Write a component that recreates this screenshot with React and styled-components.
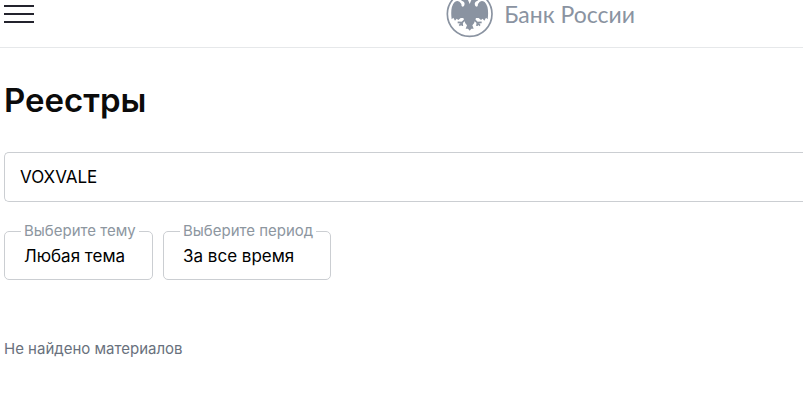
import { useState } from "react";
import styled, { createGlobalStyle } from "styled-components";

const filters = [
  { id: "theme", label: "Выберите тему", value: "Любая тема", width: 149 },
  { id: "period", label: "Выберите период", value: "За все время", width: 168 },
];

function Emblem() {
  return (
    <svg width="48" height="48" viewBox="0 0 144 144" aria-hidden="true">
      <circle cx="71" cy="72" r="67" fill="none" stroke="currentColor" strokeWidth="5" />
      <g fill="currentColor">
        <path d="M71 42 L67 32 Q62 24 53 25 L45 31 L53 35 Q58 40 54 48 Q46 54 46 42 Q38 27 26 36 Q12 50 17 88 L22 83 L27 92 L32 86 L37 90 L44 84 L52 84 L58 100 L63 106 L59 116 L66 116 L71 122 L76 116 L83 116 L79 106 L84 100 L90 84 L98 84 L105 90 L110 86 L115 92 L120 83 L125 88 Q130 50 116 36 Q104 27 96 42 Q96 54 88 48 Q84 40 89 35 L97 31 L89 25 Q80 24 75 32 Z" />
      </g>
      <g fill="none" stroke="currentColor" strokeWidth="5">
        <path d="M58 88 L48 98 L35 97 M48 98 L40 107 M48 98 L49 108" />
        <path d="M84 88 L94 98 L107 97 M94 98 L102 107 M94 98 L93 108" />
      </g>
    </svg>
  );
}

export default function App() {
  const [query, setQuery] = useState("VOXVALE");

  return (
    <>
      <GlobalStyle />
      <Header>
        <MenuButton type="button" aria-label="Меню">
          <MenuLine />
          <MenuLine />
          <MenuLine />
        </MenuButton>
        <Logo href="#">
          <Emblem />
          Банк России
        </Logo>
      </Header>
      <Main>
        <Title>Реестры</Title>
        <SearchInput
          type="text"
          aria-label="Поиск"
          value={query}
          onChange={(e) => setQuery(e.target.value)}
        />
        <Filters>
          {filters.map((f) => (
            <Filter key={f.id} $width={f.width}>
              <FilterLegend>
                <label htmlFor={f.id}>{f.label}</label>
              </FilterLegend>
              <FilterSelect id={f.id}>
                <option>{f.value}</option>
              </FilterSelect>
            </Filter>
          ))}
        </Filters>
        <Empty>Не найдено материалов</Empty>
      </Main>
    </>
  );
}

const GlobalStyle = createGlobalStyle`
  * {
    box-sizing: border-box;
  }

  body {
    margin: 0;
    background: #ffffff;
    color: #0b0b0b;
    font-family: Inter, sans-serif;
  }
`;

const Header = styled.header`
  display: grid;
  grid-template-columns: 1fr auto 168px;
  grid-template-rows: 28px;
  align-items: center;
  height: 48px;
  padding-left: 4px;
  border-bottom: 1px solid #e6e8ea;
  overflow: hidden;
`;

const MenuButton = styled.button`
  display: flex;
  flex-direction: column;
  gap: 6px;
  width: 30px;
  padding: 0;
  background: transparent;
  border: none;
  cursor: pointer;
`;

const MenuLine = styled.span`
  width: 30px;
  height: 2px;
  background: #23232d;
`;

const Logo = styled.a`
  display: flex;
  align-items: center;
  gap: 10px;
  color: #8a93a1;
  font-family: Lato, sans-serif;
  font-size: 23px;
  line-height: 28px;
  text-decoration: none;
  white-space: nowrap;
`;

const Main = styled.main`
  padding: 32px 0 32px 4px;
`;

const Title = styled.h1`
  margin: 0 0 32px;
  font-size: 33px;
  font-weight: 600;
  line-height: 40px;
`;

const SearchInput = styled.input`
  display: block;
  width: 100%;
  height: 50px;
  padding: 0 15px;
  border: 1px solid #cbced2;
  border-right: none;
  border-radius: 5px 0 0 5px;
  outline: none;
  color: #000000;
  font-family: inherit;
  font-size: 17px;
`;

const Filters = styled.div`
  display: flex;
  flex-wrap: wrap;
  gap: 10px;
  margin-top: 20px;
`;

const Filter = styled.fieldset`
  width: ${(props) => props.$width}px;
  height: 58px;
  margin: 0;
  padding: 0;
  border: 1px solid #cbced2;
  border-radius: 5px;
`;

const FilterLegend = styled.legend`
  margin-left: 16px;
  padding: 0 3px;
  color: #8d969f;
  font-size: 15px;
  line-height: 18px;
  white-space: nowrap;
`;

const FilterSelect = styled.select`
  display: block;
  width: 100%;
  height: 32px;
  padding: 0 0 0 19px;
  appearance: none;
  background: transparent;
  border: none;
  color: #000000;
  font-family: inherit;
  font-size: 17px;
`;

const Empty = styled.p`
  margin: 60px 0 0;
  color: #69717d;
  font-size: 15px;
  line-height: 18px;
`;
